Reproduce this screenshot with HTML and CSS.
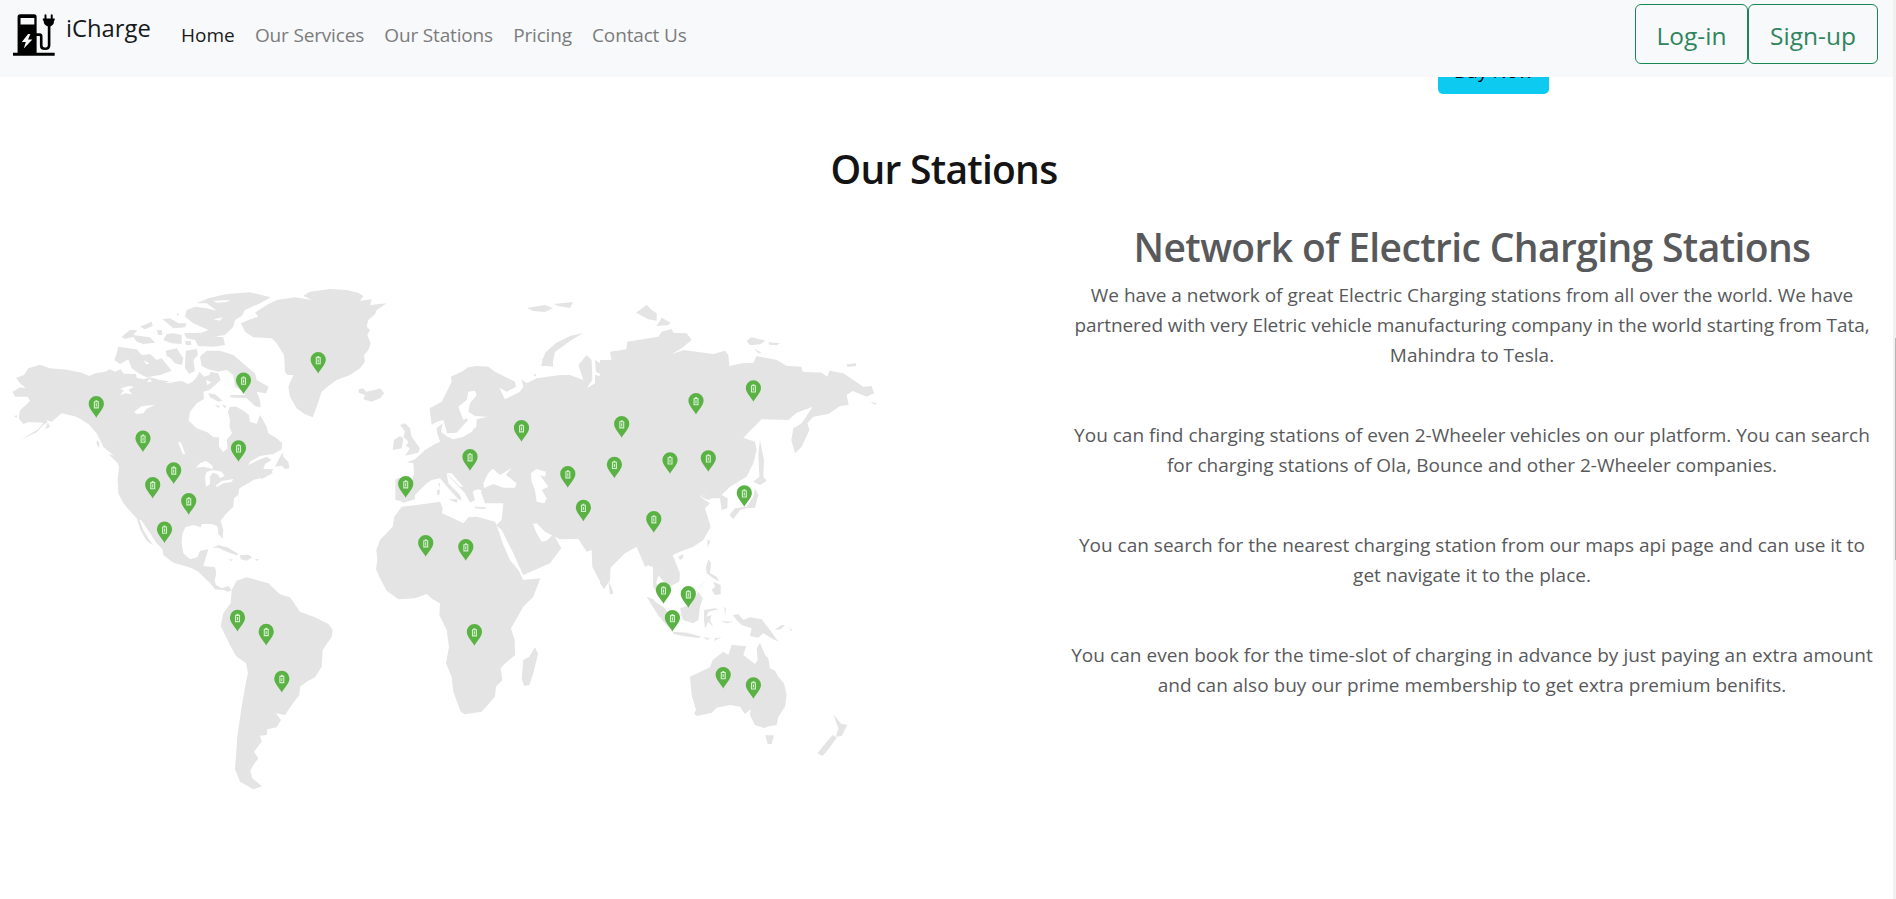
FILE: index.html
```html
<!DOCTYPE html>
<html lang="en">
<head>
<meta charset="utf-8">
<title>iCharge</title>
<link rel="stylesheet" href="styles.css">
</head>
<body>
<header class="navbar">
  <a class="brand">
    <svg class="logo" viewBox="36 38 132 134" aria-hidden="true">
      <path d="M38 159H165V168H38Z"/>
      <path fill-rule="evenodd" d="M52 160V50Q52 42 60 42H102Q110 42 110 50V160ZM61 53V73H103V53ZM84 102L65 126H77L71 146L97 119H84L91 102Z"/>
      <path class="cable" d="M108 104H119Q124 104 124 110V137Q124 147 135 147Q148 147 148 136V72"/>
      <path d="M129 55H134V43Q136 40 140 43V55H153V43Q156 40 159 43V55H165V61H163Q163 75 153 78H142Q132 75 131 61H129Z"/>
    </svg>
    <span class="brand-name">iCharge</span>
  </a>
  <nav class="links">
    <a class="active">Home</a>
    <a>Our Services</a>
    <a>Our Stations</a>
    <a>Pricing</a>
    <a>Contact Us</a>
  </nav>
  <div class="auth">
    <button class="btn">Log-in</button>
    <button class="btn signup">Sign-up</button>
  </div>
</header>
<div class="plans"><button class="buy">Buy Now</button></div>
<main>
  <h2 class="title">Our Stations</h2>
  <section class="stations">
    <svg class="map" viewBox="0 270 900 530" role="img" aria-label="World map of stations">
      <defs>
        <g id="pin">
          <path class="pin-body" d="M0 14C-2.2 9.5-7.6 5.2-7.6 0A7.6 7.6 0 0 1 7.6 0C7.6 5.2 2.2 9.5 0 14Z"/>
          <path class="pin-icon" d="M-1.9-2H2V4.2H-1.9ZM-.9-3H1"/>
          <path class="pin-icon" d="M0-.4V2.8"/>
        </g>
      </defs>
      <g class="land">
        <g transform="translate(0 280) scale(.33333)">
          <path d="M48 293L72 285L85 265L120 254L150 265L200 269L245 278L268 288L285 280L315 275L330 268L345 275L362 268L372 281L408 282L410 293L430 298L450 292L480 300L520 306L545 303L565 312L580 303L590 292L598 275L612 290L628 285L632 275L655 280L662 300L640 320L628 330L610 335L612 357L590 370L570 395L566 422L590 445L622 457L640 472L657 472L657 500L670 516L683 505L680 480L696 460L688 440L690 420L684 395L690 380L710 380L730 392L747 405L750 425L770 432L780 405L800 440L805 460L830 475L847 490L845 508L820 522L780 528L750 545L745 555L775 540L800 530L815 540L795 552L790 567L820 568L815 577L780 595L760 600L745 610L718 625L715 645L702 655L700 680L675 705L662 722L670 750L668 776L655 762L652 738L635 732L605 732L603 742L580 735L556 742L547 762L545 790L550 820L570 838L592 832L600 812L625 808L618 830L610 858L645 862L648 885L640 915L620 900L595 875L575 865L555 858L520 848L490 825L487 808L470 790L450 760L425 722L418 718L430 750L445 775L459 796L440 782L420 748L410 715L385 688L370 670L355 640L353 600L357 560L345 530L310 500L290 460L265 432L230 410L185 400L155 425L140 420L150 440L135 448L145 425L130 435L110 457L60 480L115 448L130 428L85 426L70 432L56 415L60 390L78 375L90 362L83 350L45 350L38 335L60 322L78 325L60 310Z"/>
          <path d="M723 130L745 120L775 110L765 98L800 75L830 60L885 52L935 60L910 47L930 35L990 27L1040 30L1075 38L1090 48L1080 62L1115 58L1110 75L1160 70L1130 90L1125 103L1105 120L1100 140L1110 150L1102 165L1112 190L1105 210L1092 225L1095 245L1080 265L1050 285L1010 300L985 318L965 335L952 375L938 412L915 403L890 385L870 350L865 320L880 285L862 285L855 275L852 225L830 190L815 175L760 172L735 155Z"/>
          <path d="M1076 328L1090 325L1098 335L1125 330L1140 325L1153 340L1140 355L1115 365L1090 358L1095 345L1076 338Z"/>
          <path d="M590 70L625 55L680 42L750 37L812 52L780 70L735 90L725 108L705 120L700 140L675 165L640 170L600 160L625 150L580 130L555 110L560 90L585 80L620 85L650 92L620 70Z"/>
          <path d="M365 170L390 150L412 150L400 165L450 172L465 188L430 192L410 185L400 170L375 177ZM420 140L455 125L458 138L435 148ZM488 118L510 115L535 130L560 130L555 142L520 145ZM470 150L485 150L488 165L475 165ZM500 162L520 160L545 165L545 192L515 190L490 180ZM530 100L538 103L532 108ZM552 160L600 158L635 168L670 172L675 195L640 200L595 198L585 180L560 175ZM555 184L572 182L574 195L558 195Z"/>
          <path d="M355 200L385 205L410 208L425 225L450 222L470 240L485 235L515 272L480 285L440 292L420 282L395 265L385 238L360 252L343 240L350 220Z"/>
          <path d="M497 212L530 205L550 235L545 255L525 250L512 235L500 228ZM558 212L590 207L594 225L580 240L585 272L568 282L555 265L556 230Z"/>
          <path d="M600 230L620 212L660 212L700 225L735 255L765 280L770 300L806 320L798 340L770 335L780 360L782 382L765 378L740 355L690 352L692 345L735 345L730 335L705 320L700 285L680 270L655 275L625 268L605 258Z"/>
          <path d="M625 340L645 343L668 362L655 365L630 352ZM645 375L660 378L655 384ZM668 372L680 380L672 384ZM825 560L838 535L847 518L850 530L865 545L868 565L855 567L845 557ZM775 590L815 572L818 580L785 597ZM325 522L345 528L365 550L350 547ZM292 480L298 488L297 505L289 490ZM42 408L52 406L50 414Z"/>
          <path d="M638 804L655 795L685 803L715 822L710 826L680 815L655 803ZM720 825L745 824L757 832L740 842L722 838ZM684 837L700 839L694 843ZM765 837L778 838L770 843Z"/>
          <path class="water" d="M360 327L385 318L402 320L385 330L397 343L375 340L360 346L372 330ZM402 396L425 378L465 375L440 386L430 400L410 402ZM534 485L543 488L556 522L548 522ZM588 563L600 550L618 543L638 557L638 567L610 560ZM618 620L615 590L620 575L640 570L665 575L674 588L660 595L652 582L638 578L630 590L630 612ZM648 616L665 603L700 597L695 606L670 610L650 621Z"/>
          <path class="water" d="M440 305L450 296L456 305ZM495 308L510 304L520 309ZM640 62L690 60L680 66L650 68ZM640 118L668 112L660 122ZM430 240L448 250L440 254ZM618 300L634 306L622 316Z"/>
        </g>
        <g transform="translate(200 540) scale(.33333)">
          <path d="M-10 85L45 85L48 95L40 110L48 135L65 145L85 138L95 150L85 155L70 150L45 148L15 110L-10 90Z"/>
          <path d="M95 150L110 122L140 112L170 120L205 130L240 163L270 172L300 215L345 232L385 252L398 270L395 290L368 330L365 380L345 412L320 425L300 440L298 465L275 495L255 525L228 520L243 540L230 562L202 568L200 585L180 587L185 605L162 635L175 655L160 675L151 692L157 715L186 739L160 748L120 725L105 688L112 590L125 500L137 430L144 400L138 370L108 348L90 315L62 258L70 220L92 190Z"/>
        </g>
        <g transform="translate(360 340) scale(.33333)">
          <path d="M125 500L170 495L240 485L248 505L246 520L270 530L310 550L325 532L350 530L405 545L412 562L430 615L450 660L475 690L490 720L541 715L520 770L490 800L453 865L464 900L465 945L430 975L422 985L427 1020L408 1040L405 1070L365 1115L315 1123L302 1115L280 1055L275 1010L258 970L267 920L260 870L238 825L240 790L218 778L200 762L165 775L115 778L80 752L58 710L48 688L52 660L49 630L60 600L98 560L103 530Z"/>
          <path d="M525 922L534 942L520 1000L508 1035L493 1038L485 1018L490 960L508 950Z"/>
          <path d="M106 420L115 413L158 418L162 400L160 370L140 367L165 358L195 330L225 312L240 305L232 280L230 265L248 250L243 275L262 290L280 298L310 290L335 275L350 255L325 240L315 250L290 278L262 280L250 240L230 245L215 255L209 205L245 185L275 125L272 110L290 102L310 92L325 82L350 78L385 80L405 95L465 125L468 140L440 155L418 143L435 178L480 155L490 140L485 118L500 130L530 115L600 105L630 105L670 120L655 75L680 45L695 60L697 120L680 145L705 130L705 105L735 110L708 95L705 60L730 75L765 65L750 35L800 28L830 0L900 0L900 640L895 640L900 690L885 740L880 680L868 678L852 665L830 620L795 635L752 678L750 720L732 747L715 715L697 680L695 630L680 635L655 597L600 598L580 588L555 575L530 550L519 552L530 580L545 605L560 602L580 583L604 625L570 670L490 705L480 685L460 640L425 570L408 555L425 540L430 490L375 490L365 462L350 450L338 455L345 480L330 488L315 460L275 418L260 400L265 430L300 465L305 480L295 478L265 445L240 415L215 420L200 430L185 445L165 465L165 478L130 488L120 482L106 480Z"/>
          <path d="M545 60L580 20L630 0L610 10L575 45L580 80L560 78ZM98 330L102 300L120 288L130 295L125 325ZM120 255L135 250L150 265L155 290L180 325L175 338L135 347L150 325L138 318L145 305L130 290L135 275ZM752 735L760 760L750 763ZM862 770L900 800L900 835L875 795ZM520 103L530 103L525 110ZM231 450L240 448L238 465L232 465ZM235 430L240 430L238 445ZM265 478L293 478L290 488ZM345 500L378 502L375 507L345 505Z"/>
          <path class="water" d="M325 155L345 152L350 165L330 190L325 215L345 228L382 230L350 238L348 265L330 250L320 235L310 240L295 200L320 180ZM370 430L385 400L398 386L420 405L445 390L455 382L438 405L470 430L465 443L430 443L400 432L372 445ZM512 400L530 387L558 395L555 410L540 405L565 440L545 450L560 475L553 490L530 485L525 450L515 425ZM340 452L355 448L365 452L362 462ZM260 400L275 400L310 440L300 440Z"/>
        </g>
        <g transform="translate(600 280) scale(.33333)">
          <path d="M0 240L35 240L30 218L78 212L82 185L175 170L185 155L215 147L220 158L260 160L275 180L245 205L215 223L250 210L340 222L375 212L385 225L388 258L425 250L460 248L470 228L530 240L560 257L604 260L608 275L665 278L682 290L688 272L730 280L790 320L815 318L822 340L800 350L758 333L740 345L746 375L720 378L685 402L640 410L622 430L628 450L605 500L585 520L574 480L580 445L605 430L638 380L590 398L565 420L485 418L430 473L465 485L470 510L460 550L440 590L390 620L365 645L383 655L382 685L365 690L360 655L335 655L325 660L302 650L330 630L300 650L330 670L315 685L332 740L310 780L280 800L240 815L218 825L240 880L238 905L205 922L170 880L168 905L195 970L175 950L160 920L158 850L135 860L110 800L75 820L30 865L28 900L12 927L0 910Z"/>
          <path d="M108 98L140 74L155 90L170 100L170 122L145 118ZM170 138L185 113L212 128L205 135ZM440 182L455 172L497 182L480 193L450 196ZM505 187L540 190L530 196L508 194ZM462 205L485 218L475 220ZM740 253L768 250L768 258L742 261ZM810 365L830 370L825 374ZM480 480L492 540L490 590L500 602L480 615L460 605L478 590L475 520ZM465 625L475 645L465 683L440 685L420 690L400 718L388 705L405 685L440 680L460 650ZM322 780L331 782L323 803ZM235 830L250 822L248 835L240 840ZM25 900L40 940L30 943ZM325 838L333 850L330 880L350 890L358 905L340 895L320 880L318 860ZM340 905L362 915L362 943L345 945L335 930L345 920ZM315 903L302 922L300 920ZM140 950L165 965L195 985L215 1020L190 1010Z"/>
        </g>
        <g transform="translate(620 540) scale(.33333)">
          <path d="M80 170L100 178L125 210L150 240L160 275L130 245L100 200ZM158 275L200 278L245 290L235 294L190 288L160 282ZM250 292L270 294L262 300ZM285 295L305 292L282 303ZM180 205L210 195L235 155L248 175L240 200L235 240L220 250L188 240ZM252 210L285 205L295 208L265 215L260 230L275 225L270 240L280 262L265 245L255 265L252 240ZM313 200L318 205L315 225ZM302 243L340 245L320 250ZM338 225L355 223L370 240L390 232L425 238L450 270L475 305L455 295L430 280L415 293L390 288L395 265L365 255L350 240ZM463 270L485 255L495 255L482 268ZM508 262L518 273L512 272Z"/>
          <path d="M210 410L270 382L278 360L310 335L325 345L335 315L378 318L370 345L405 372L413 360L410 325L420 308L435 345L445 355L450 385L465 392L475 410L492 430L500 465L495 500L475 530L470 555L440 560L435 565L405 555L390 525L392 508L375 522L360 500L330 495L290 503L275 518L232 528L222 522L228 510L215 465ZM436 586L462 586L455 612L443 612ZM640 523L664 552L682 555L665 588L648 590L655 565ZM638 585L650 593L622 632L607 648L592 640L618 608Z"/>
        </g>
        <path d="M541 366L545 353L556 343L570 336L583 333L570 341L555 352L552 366ZM527 308L545 305L553 308L545 312L533 311ZM554 304L573 302L570 308L558 306Z"/>
      </g>
      <g class="pins">
        <use href="#pin" x="96.3" y="403.7"/><use href="#pin" x="143" y="438"/><use href="#pin" x="173.7" y="469.9"/><use href="#pin" x="152.7" y="484.6"/><use href="#pin" x="188.7" y="500.7"/><use href="#pin" x="164.5" y="529"/><use href="#pin" x="238.5" y="447.8"/><use href="#pin" x="243.5" y="380"/><use href="#pin" x="318.2" y="359.6"/>
        <use href="#pin" x="237.5" y="617.4"/><use href="#pin" x="266.2" y="631.4"/><use href="#pin" x="281.8" y="678.4"/>
        <use href="#pin" x="405.7" y="483.7"/><use href="#pin" x="470" y="456.7"/><use href="#pin" x="521.5" y="427.7"/><use href="#pin" x="621.7" y="423.7"/><use href="#pin" x="567.8" y="473.7"/><use href="#pin" x="614.4" y="464.3"/><use href="#pin" x="583.4" y="507.3"/><use href="#pin" x="653.8" y="518.7"/><use href="#pin" x="425.7" y="542.7"/><use href="#pin" x="465.8" y="546.7"/><use href="#pin" x="474.4" y="631.7"/>
        <use href="#pin" x="696" y="400.6"/><use href="#pin" x="753.4" y="387.8"/><use href="#pin" x="670" y="459.8"/><use href="#pin" x="708.3" y="457.8"/><use href="#pin" x="744.3" y="492.8"/><use href="#pin" x="663.5" y="589.8"/><use href="#pin" x="688.3" y="593.7"/>
        <use href="#pin" x="672.4" y="617.6"/><use href="#pin" x="723.2" y="674.5"/><use href="#pin" x="753.4" y="684.8"/>
      </g>
    </svg>
    <article class="about">
      <h2>Network of Electric Charging Stations</h2>
      <p>We have a network of great Electric Charging stations from all over the world. We have<br><span class="tight">partnered with very Eletric vehicle manufacturing company in the world starting from Tata,</span><br>Mahindra to Tesla.</p>
      <p>You can find charging stations of even 2-Wheeler vehicles on our platform. You can search<br>for charging stations of Ola, Bounce and other 2-Wheeler companies.</p>
      <p>You can search for the nearest charging station from our maps api page and can use it to<br>get navigate it to the place.</p>
      <p><span class="loose">You can even book for the time-slot of charging in advance by just paying an extra amount</span><br>and can also buy our prime membership to get extra premium benifits.</p>
    </article>
  </section>
</main>
<div class="scrollbar"><div class="thumb"></div></div>
</body>
</html>
```
FILE: styles.css
```css
* { box-sizing: border-box; }
body {
  margin: 0;
  height: 899px;
  overflow: hidden;
  background: #fff;
  color: #212529;
  font-family: "Open Sans", "Noto Sans", sans-serif;
  font-size: 19px;
  line-height: 30px;
}
.navbar {
  position: relative;
  z-index: 1;
  display: flex;
  align-items: flex-start;
  height: 77px;
  padding: 4px 18px 0 12px;
  background: #f8f9fa;
}
.brand { display: flex; width: 169px; padding-top: 9px; color: #16191c; }
.logo { width: 44px; height: 44px; }
.cable { fill: none; stroke: #000; stroke-width: 8; }
.brand-name { margin-left: 10px; font-size: 23.8px; }
.links { display: flex; gap: 20.2px; padding-top: 16px; color: #7b7c7d; letter-spacing: -.16px; }
.links .active { color: #191a1a; letter-spacing: 0; }
.auth { display: flex; margin-left: auto; }
.btn {
  width: 113px;
  height: 60px;
  padding: 2px 0 0;
  border: 1px solid #198754;
  border-radius: 6px;
  background: none;
  color: #2f855d;
  font: 24.5px "Open Sans", sans-serif;
}
.signup { width: 130px; }
.plans { display: flex; justify-content: flex-end; height: 48px; margin-top: -31px; padding-right: 347px; }
.buy { width: 111px; height: 48px; padding: 2px 0 0; border: 0; border-radius: 5px; background: #0dcaf0; color: #000; font: 19px "Open Sans", sans-serif; }
h2 { margin: 0; font-size: 39px; line-height: 48px; font-weight: 600; letter-spacing: -.62px; }
.title { margin-top: 51px; padding-right: 8px; text-align: center; color: #141414; letter-spacing: -.75px; }
.stations { display: flex; justify-content: space-between; padding-right: 12px; margin-top: 30px; }
.map { width: 900px; height: 530px; margin-top: 47px; }
.land { fill: #e4e4e4; }
.water { fill: #fff; }
.pin-body { fill: #5ab245; }
.pin-icon { fill: none; stroke: #d5f0cf; stroke-width: 1.1; }
.about { width: 824px; text-align: center; white-space: nowrap; color: #58595b; }
.about p { margin: 9px 0 50px; }
.about p + p { margin-top: 0; }
.tight { letter-spacing: -.07px; }
.loose { letter-spacing: .05px; }
.scrollbar { position: absolute; right: 0; top: 0; z-index: 2; width: 3px; height: 899px; background: #f1f1f1; }
.thumb { width: 1px; height: 222px; margin: 338px 0 0 auto; background: #b5b5b5; }
```
